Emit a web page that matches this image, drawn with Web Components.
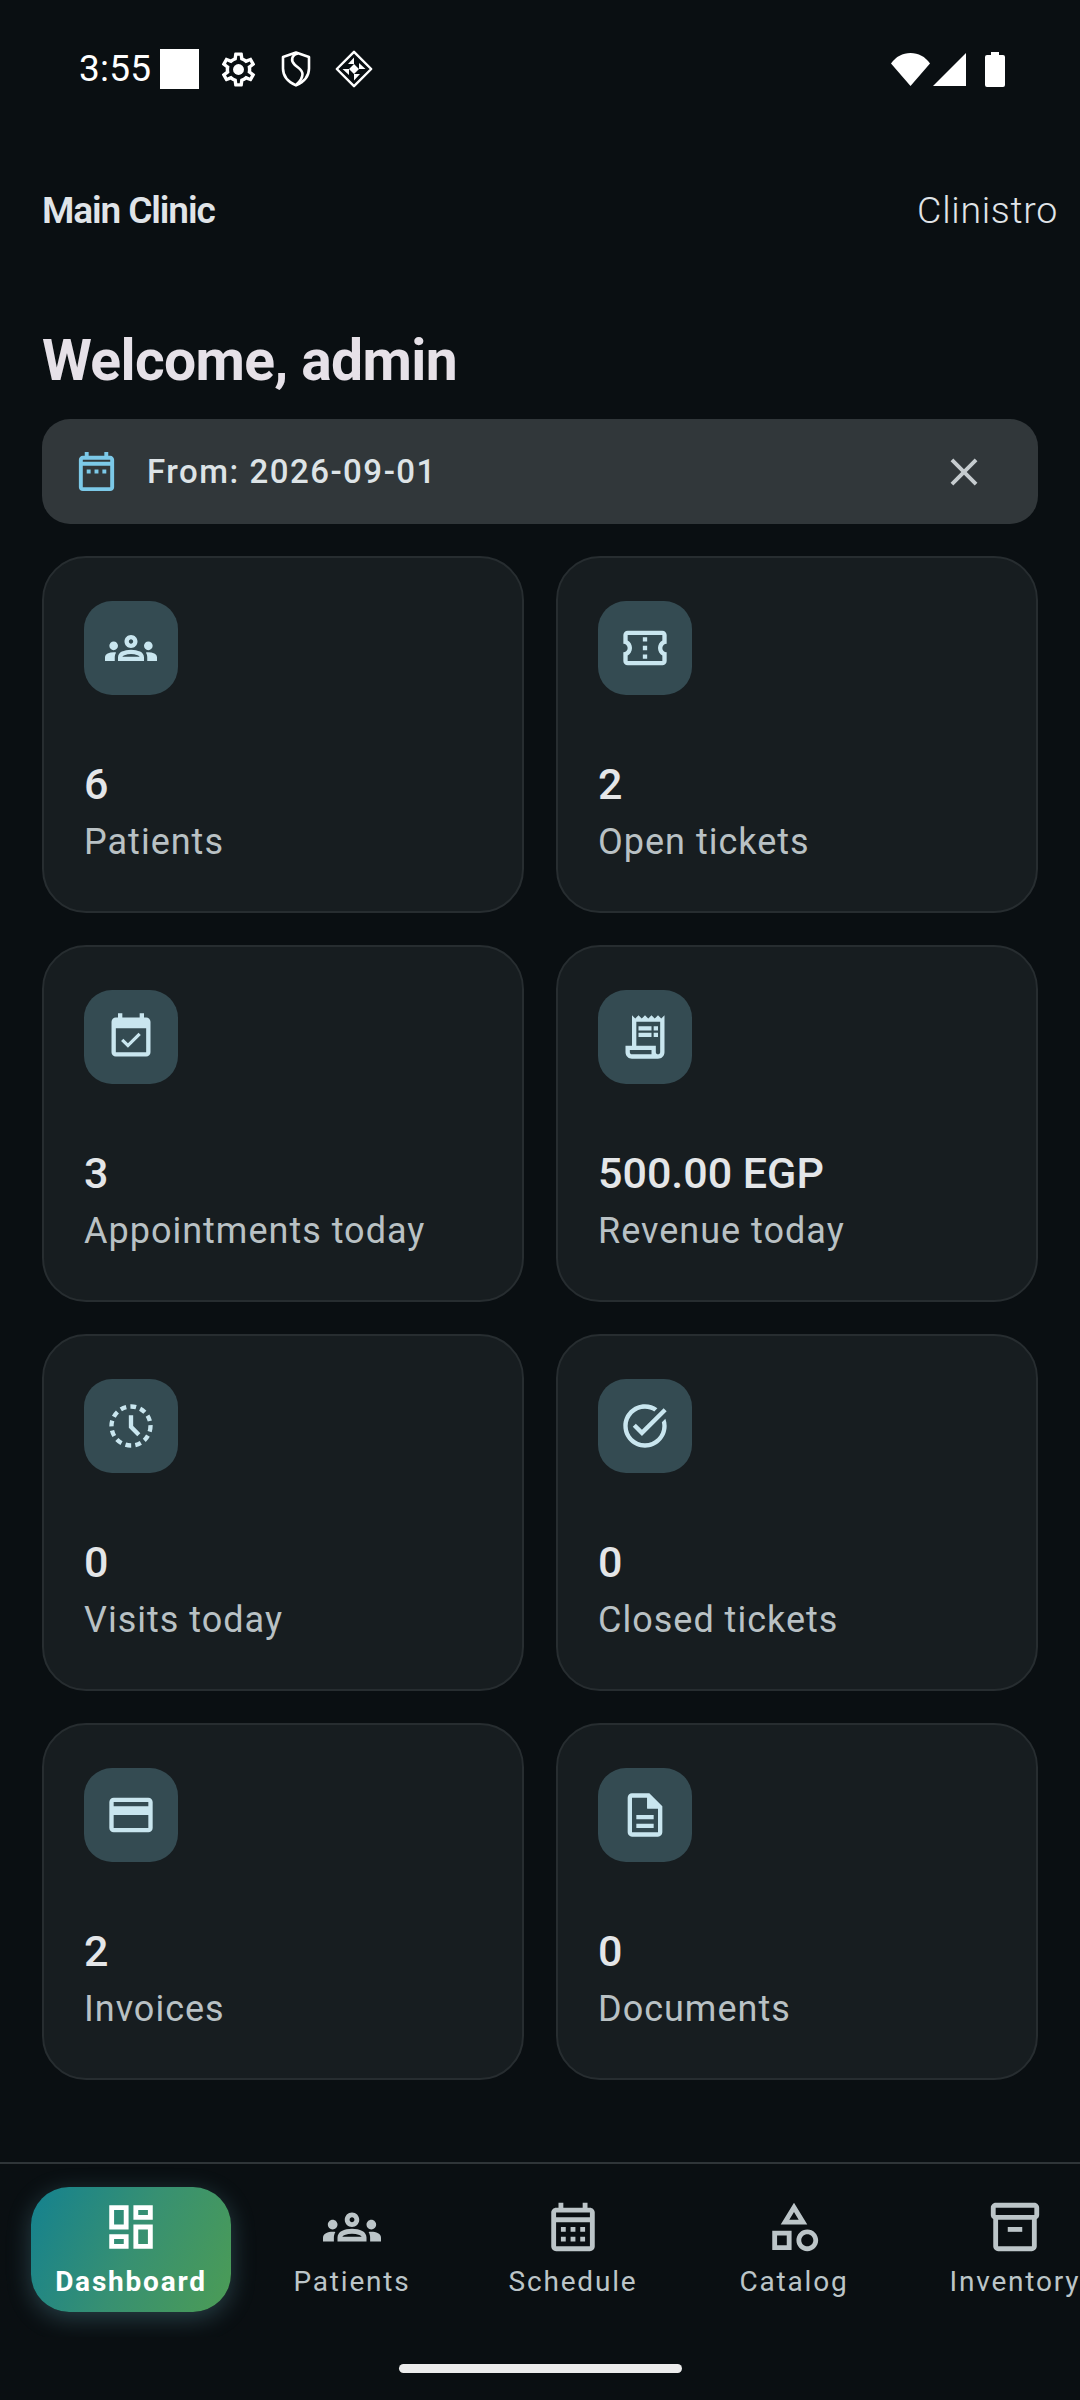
<!DOCTYPE html>
<html lang="en">
<head>
<meta charset="utf-8">
<title>Clinistro</title>
<style>
html, body { margin: 0; padding: 0; background: #0a0f12; }
body {
  width: 1080px;
  height: 2400px;
  overflow: hidden;
  display: flex;
  flex-direction: column;
  font-family: Roboto, "Noto Sans", sans-serif;
}
</style>
</head>
<body>
<status-bar></status-bar>
<app-bar title="Main Clinic" brand="Clinistro"></app-bar>
<main-view>
  <date-chip label="From: 2026-09-01"></date-chip>
  <stat-card icon="groups" value="6" label="Patients"></stat-card>
  <stat-card icon="ticket" value="2" label="Open tickets"></stat-card>
  <stat-card icon="event" value="3" label="Appointments today"></stat-card>
  <stat-card icon="receipt" value="500.00 EGP" label="Revenue today"></stat-card>
  <stat-card icon="clock" value="0" label="Visits today"></stat-card>
  <stat-card icon="task" value="0" label="Closed tickets"></stat-card>
  <stat-card icon="card" value="2" label="Invoices"></stat-card>
  <stat-card icon="doc" value="0" label="Documents"></stat-card>
</main-view>
<bottom-nav>
  <nav-item icon="dashboard" label="Dashboard" active></nav-item>
  <nav-item icon="groups" label="Patients"></nav-item>
  <nav-item icon="calendar" label="Schedule"></nav-item>
  <nav-item icon="category" label="Catalog"></nav-item>
  <nav-item icon="inventory" label="Inventory"></nav-item>
</bottom-nav>

<script>
const ICONS = {
  groups: '<path fill="currentColor" d="M4 13c1.1 0 2-.9 2-2s-.9-2-2-2-2 .9-2 2 .9 2 2 2zm1.13 1.1c-.37-.06-.74-.1-1.13-.1-.99 0-1.93.21-2.78.58C.48 14.9 0 15.62 0 16.43V18h4.5v-1.61c0-.83.23-1.61.63-2.29zM20 13c1.1 0 2-.9 2-2s-.9-2-2-2-2 .9-2 2 .9 2 2 2zm4 3.43c0-.81-.48-1.53-1.22-1.85-.85-.37-1.79-.58-2.78-.58-.39 0-.76.04-1.13.1.4.68.63 1.46.63 2.29V18H24v-1.57zm-7.76-2.78C15.07 13.13 13.63 12.75 12 12.75c-1.63 0-3.07.39-4.24.9C6.68 14.13 6 15.21 6 16.39V18h12v-1.61c0-1.18-.68-2.26-1.76-2.74zM8.07 16c.09-.23.13-.39.91-.69.97-.38 1.99-.56 3.02-.56s2.05.18 3.02.56c.77.3.81.46.91.69H8.07zM12 8c.55 0 1 .45 1 1s-.45 1-1 1-1-.45-1-1 .45-1 1-1m0-2c-1.66 0-3 1.34-3 3s1.34 3 3 3 3-1.34 3-3-1.34-3-3-3z"/>',
  ticket: '<path fill="currentColor" d="M22 10V6c0-1.11-.9-2-2-2H4c-1.1 0-1.99.89-1.99 2v4c1.1 0 1.99.9 1.99 2s-.89 2-2 2v4c0 1.1.9 2 2 2h16c1.1 0 2-.9 2-2v-4c-1.1 0-2-.9-2-2s.9-2 2-2zm-2-1.46c-1.19.69-2 1.99-2 3.46s.81 2.77 2 3.46V18H4v-2.54c1.19-.69 2-1.99 2-3.46 0-1.48-.8-2.77-1.99-3.46L4 6h16v2.54zM11 15h2v2h-2zm0-4h2v2h-2zm0-4h2v2h-2z"/>',
  event: '<path fill="currentColor" d="M16.53 11.06L15.47 10l-4.88 4.88-2.12-2.12-1.06 1.06L10.59 17l5.94-5.94zM19 3h-1V1h-2v2H8V1H6v2H5c-1.11 0-1.99.9-1.99 2L3 19c0 1.1.89 2 2 2h14c1.1 0 2-.9 2-2V5c0-1.1-.9-2-2-2zm0 16H5V8h14v11z"/>',
  receipt: '<path fill="currentColor" d="M19.5 3.5 18 2l-1.5 1.5L15 2l-1.5 1.5L12 2l-1.5 1.5L9 2 7.5 3.5 6 2v14H3v3c0 1.66 1.34 3 3 3h12c1.66 0 3-1.34 3-3V2l-1.5 1.5zM15 20H6c-.55 0-1-.45-1-1v-1h10v2zm4-1c0 .55-.45 1-1 1s-1-.45-1-1v-3H8V5h11v14z"/><path fill="currentColor" d="M9 7h6v2H9zm7 0h2v2h-2zM9 10h6v2H9zm7 0h2v2h-2z"/>',
  clock: '<circle cx="12" cy="12" r="9" fill="none" stroke="currentColor" stroke-width="2" stroke-dasharray="2.7 1.95"/><path fill="none" stroke="currentColor" stroke-width="2" d="M12 7v5.4l3.6 3.6"/>',
  task: '<path fill="currentColor" d="M22 5.18L10.59 16.6l-4.24-4.24 1.41-1.41 2.83 2.83 10-10L22 5.18zm-2.21 5.04c.13.57.21 1.17.21 1.78 0 4.42-3.58 8-8 8s-8-3.58-8-8 3.58-8 8-8c1.58 0 3.04.46 4.28 1.25l1.44-1.44C16.1 2.67 14.13 2 12 2 6.48 2 2 6.48 2 12s4.48 10 10 10 10-4.48 10-10c0-1.19-.22-2.33-.6-3.39l-1.61 1.61z"/>',
  card: '<path fill="currentColor" d="M20 4H4c-1.11 0-1.99.89-1.99 2L2 18c0 1.11.89 2 2 2h16c1.11 0 2-.89 2-2V6c0-1.11-.89-2-2-2zm0 14H4v-6h16v6zm0-10H4V6h16v2z"/>',
  doc: '<path fill="currentColor" d="M8 16h8v2H8zm0-4h8v2H8zm6-10H6c-1.1 0-2 .9-2 2v16c0 1.1.89 2 1.99 2H18c1.1 0 2-.9 2-2V8l-6-6zm4 18H6V4h7v5h5v11z"/><path fill="currentColor" d="M13 3h1l5 5v1h-6z"/>',
  dashboard: '<path fill="currentColor" d="M19 5v2h-4V5h4M9 5v6H5V5h4m10 8v6h-4v-6h4M9 17v2H5v-2h4M21 3h-8v6h8V3zM11 3H3v10h8V3zm10 8h-8v10h8V11zm-10 4H3v6h8v-6z"/>',
  calendar: '<path fill="currentColor" d="M19 4h-1V2h-2v2H8V2H6v2H5c-1.1 0-2 .9-2 2v14c0 1.1.9 2 2 2h14c1.1 0 2-.9 2-2V6c0-1.1-.9-2-2-2zm0 16H5V10h14v10zm0-12H5V6h14v2zM9 14H7v-2h2v2zm4 0h-2v-2h2v2zm4 0h-2v-2h2v2zm-8 4H7v-2h2v2zm4 0h-2v-2h2v2zm4 0h-2v-2h2v2z"/>',
  category: '<path fill="currentColor" d="M12 2l-5.5 9h11L12 2zm0 3.84L13.93 9h-3.87L12 5.84zM17.5 13c-2.49 0-4.5 2.01-4.5 4.5s2.01 4.5 4.5 4.5 4.5-2.01 4.5-4.5-2.01-4.5-4.5-4.5zm0 7c-1.38 0-2.5-1.12-2.5-2.5s1.12-2.5 2.5-2.5 2.5 1.12 2.5 2.5-1.12 2.5-2.5 2.5zM3 21.5h8v-8H3v8zm2-6h4v4H5v-4z"/>',
  inventory: '<path fill="currentColor" d="M20 2H4c-1 0-2 .9-2 2v3.01c0 .72.43 1.34 1 1.69V20c0 1.1 1.1 2 2 2h14c.9 0 2-.9 2-2V8.7c.57-.35 1-.97 1-1.69V4c0-1.1-1-2-2-2zm-1 18H5V9h14v11zm1-13H4V4h16v3z"/><path fill="currentColor" d="M9 12h6v2H9z"/>',
  daterange: '<path fill="currentColor" d="M19 4h-1V2h-2v2H8V2H6v2H5c-1.1 0-2 .9-2 2v14c0 1.1.9 2 2 2h14c1.1 0 2-.9 2-2V6c0-1.1-.9-2-2-2zm0 16H5V9h14v11zm0-13H5V6h14v1zM7 11h2v2H7zm4 0h2v2h-2zm4 0h2v2h-2z"/>',
  close: '<path fill="currentColor" d="M19 6.41L17.59 5 12 10.59 6.41 5 5 6.41 10.59 12 5 17.59 6.41 19 12 13.41 17.59 19 19 17.59 13.41 12z"/>'
}

const svgIcon = (name, size) => `<svg viewBox="0 0 24 24" width="${size}" height="${size}">${ICONS[name]}</svg>`

customElements.define('status-bar',
  class extends HTMLElement {
    constructor () {
      super()
      this.attachShadow({ mode: 'open' }).innerHTML = `
<style>
:host {
  display: flex;
  align-items: center;
  height: 138px;
  box-sizing: border-box;
  padding: 0 75px 0 79px;
  color: #fff;
  font-size: 37px;
  line-height: 40px;
}
.time { width: 81px; letter-spacing: .2px; }
.block { width: 39px; height: 40px; background: #fff; }
svg { display: block; flex: none; }
.gear { margin-left: 19px; }
.shield { margin-left: 22px; }
.diamond { margin-left: 24px; }
.right { margin-left: auto; display: flex; align-items: center; }
.signal { margin-left: 3px; }
.battery { margin-left: 19px; }
</style>
<span class="time">3:55</span>
<span class="block"></span>
<svg class="gear" width="41" height="41" viewBox="0 0 24 24"><path fill="#fff" d="M19.43 12.98c.04-.32.07-.64.07-.98 0-.34-.03-.66-.07-.98l2.11-1.65c.19-.15.24-.42.12-.64l-2-3.46c-.09-.16-.26-.25-.44-.25-.06 0-.12.01-.17.03l-2.49 1c-.52-.4-1.08-.73-1.69-.98l-.38-2.65C14.46 2.18 14.25 2 14 2h-4c-.25 0-.46.18-.49.42l-.38 2.65c-.61.25-1.17.59-1.69.98l-2.49-1c-.06-.02-.12-.03-.18-.03-.17 0-.34.09-.43.25l-2 3.46c-.13.22-.07.49.12.64l2.11 1.65c-.04.32-.07.65-.07.98 0 .33.03.66.07.98l-2.11 1.65c-.19.15-.24.42-.12.64l2 3.46c.09.16.26.25.44.25.06 0 .12-.01.17-.03l2.49-1c.52.4 1.08.73 1.69.98l.38 2.65c.03.24.24.42.49.42h4c.25 0 .46-.18.49-.42l.38-2.65c.61-.25 1.17-.59 1.69-.98l2.49 1c.06.02.12.03.18.03.17 0 .34-.09.43-.25l2-3.46c.12-.22.07-.49-.12-.64l-2.11-1.65zm-1.98-1.71c.04.31.05.52.05.73 0 .21-.02.43-.05.73l-.14 1.13.89.7 1.08.84-.7 1.21-1.27-.51-1.04-.42-.9.68c-.43.32-.84.56-1.25.73l-1.06.43-.16 1.13-.2 1.35h-1.4l-.19-1.35-.16-1.13-1.06-.43c-.43-.18-.83-.41-1.23-.71l-.91-.7-1.06.43-1.27.51-.7-1.21 1.08-.84.89-.7-.14-1.13c-.03-.31-.05-.54-.05-.74s.02-.43.05-.73l.14-1.13-.89-.7-1.08-.84.7-1.21 1.27.51 1.04.42.9-.68c.43-.32.84-.56 1.25-.73l1.06-.43.16-1.13.2-1.35h1.39l.19 1.35.16 1.13 1.06.43c.43.18.83.41 1.23.71l.91.7 1.06-.43 1.27-.51.7 1.21-1.07.85-.89.7.14 1.13z"/><circle cx="12" cy="12" r="3.200" fill="#fff"/></svg>
<svg class="shield" width="30" height="36" viewBox="0 0 30 36" fill="none" stroke="#fff" stroke-width="2.600"><path d="M2 6 15 1.600 28 6v11.500c0 7.500-5.400 13.500-13 16.900C7.400 31 2 25 2 17.500z" stroke-linejoin="round"/><path d="M17 2.500C10.500 4 9.500 9.500 13.500 13.500c3.500 3.500 8 5 8 9.500 0 4.500-3 8-6.500 11"/></svg>
<svg class="diamond" width="38" height="38" viewBox="0 0 38 38"><path d="M19 1.800 36.200 19 19 36.200 1.800 19z" fill="none" stroke="#fff" stroke-width="2.400" stroke-linejoin="round"/><path fill="#fff" d="M19 7.500V14h-6zM19 19l0-5 5 5zM30.500 19H24v-6zM19 19h5l-5 5zM19 30.500V24h6zM19 19v5l-5-5zM7.500 19H14v6zM19 19h-5l5-5z"/></svg>
<div class="right">
  <svg width="39" height="33" viewBox="0 0 39 33"><path fill="#fff" d="M0 10.500C5 3.500 11.500 0 19.500 0S34 3.500 39 10.500L19.500 33z"/></svg>
  <svg class="signal" width="33" height="33" viewBox="0 0 33 33"><path fill="#fff" d="M33 0v33H0z"/></svg>
  <svg class="battery" width="20" height="35" viewBox="0 0 20 35"><path fill="#fff" d="M6 0h8v3h4a2 2 0 0 1 2 2v28a2 2 0 0 1-2 2H2a2 2 0 0 1-2-2V5a2 2 0 0 1 2-2h4z"/></svg>
</div>`
    }
  }
)

customElements.define('app-bar',
  class extends HTMLElement {
    constructor () {
      super()
      this.attachShadow({ mode: 'open' }).innerHTML = `
<style>
:host {
  display: flex;
  align-items: center;
  justify-content: space-between;
  height: 144px;
  box-sizing: border-box;
  padding: 0 22px 0 42px;
  color: #e0e4e8;
}
.title { font-size: 37px; font-weight: 600; letter-spacing: -1.1px; }
.brand { font-size: 37.5px; font-weight: 300; letter-spacing: .7px; }
</style>
<span class="title">${this.getAttribute('title')}</span>
<span class="brand">${this.getAttribute('brand')}</span>`
    }
  }
)

customElements.define('main-view',
  class extends HTMLElement {
    constructor () {
      super()
      this.attachShadow({ mode: 'open' }).innerHTML = `
<style>
:host {
  display: block;
  flex: 1;
  min-height: 0;
  box-sizing: border-box;
  padding: 0 42px;
}
h1 {
  margin: 0;
  height: 137px;
  padding-top: 47px;
  box-sizing: border-box;
  font-size: 57px;
  line-height: 64px;
  font-weight: 700;
  letter-spacing: -.65px;
  color: #e6e1e8;
}
.filters { display: block; margin-bottom: 32px; }
.grid {
  display: grid;
  grid-template-columns: 482px 482px;
  grid-auto-rows: 357px;
  gap: 32px;
}
</style>
<h1>Welcome, admin</h1>
<div class="filters"><slot name="filters"></slot></div>
<div class="grid"><slot></slot></div>`
    }

    connectedCallback () {
      const chip = this.querySelector('date-chip')
      if (chip) chip.setAttribute('slot', 'filters')
    }
  }
)

customElements.define('date-chip',
  class extends HTMLElement {
    constructor () {
      super()
      this.attachShadow({ mode: 'open' }).innerHTML = `
<style>
:host {
  display: flex;
  align-items: center;
  height: 105px;
  box-sizing: border-box;
  padding: 0 51px 0 31px;
  border-radius: 28px;
  background: #31373a;
  color: #dde3e6;
  font-size: 33px;
  font-weight: 500;
  letter-spacing: 1.5px;
}
svg { display: block; flex: none; }
.date { color: #7cc9e8; margin-right: 27px; }
.text { flex: 1; }
.close { color: #c6cccf; }
</style>
<span class="date">${svgIcon('daterange', 47)}</span>
<span class="text">${this.getAttribute('label')}</span>
<span class="close">${svgIcon('close', 46)}</span>`
    }
  }
)

customElements.define('stat-card',
  class extends HTMLElement {
    constructor () {
      super()
      this.attachShadow({ mode: 'open' }).innerHTML = `
<style>
:host {
  display: flex;
  flex-direction: column;
  box-sizing: border-box;
  padding: 43px 40px;
  border: 2px solid #272d30;
  border-radius: 44px;
  background: #171d20;
}
.tile {
  display: flex;
  align-items: center;
  justify-content: center;
  width: 94px;
  height: 94px;
  border-radius: 28px;
  background: #344b52;
  color: #c9e6ef;
}
svg { display: block; }
.value {
  margin-top: 61px;
  font-size: 43px;
  line-height: 56px;
  font-weight: 500;
  color: #e4e6e8;
}
.label {
  margin-top: 4px;
  font-size: 36px;
  line-height: 52px;
  letter-spacing: 1px;
  color: #b9c1c4;
}
</style>
<div class="tile">${svgIcon(this.getAttribute('icon'), 52)}</div>
<div class="value">${this.getAttribute('value')}</div>
<div class="label">${this.getAttribute('label')}</div>`
    }
  }
)

customElements.define('bottom-nav',
  class extends HTMLElement {
    constructor () {
      super()
      this.attachShadow({ mode: 'open' }).innerHTML = `
<style>
:host {
  display: block;
  height: 238px;
  box-sizing: border-box;
  border-top: 2px solid #2f3538;
  overflow: hidden;
  background: #0a0f12;
}
.items {
  display: flex;
  gap: 21px;
  padding: 23px 0 0 31px;
  height: 150px;
  overflow: hidden;
}
.pill {
  width: 283px;
  height: 9px;
  margin: 27px auto 0;
  border-radius: 5px;
  background: #ececec;
}
</style>
<div class="items"><slot></slot></div>
<div class="pill"></div>`
    }
  }
)

customElements.define('nav-item',
  class extends HTMLElement {
    constructor () {
      super()
      const active = this.hasAttribute('active')
      this.attachShadow({ mode: 'open' }).innerHTML = `
<style>
:host {
  display: flex;
  flex-direction: column;
  align-items: center;
  flex: none;
  width: 200px;
  height: 125px;
  box-sizing: border-box;
  padding-top: 11px;
  border-radius: 38px;
  color: #bcc5c8;
  white-space: nowrap;
}
:host([active]) {
  color: #fff;
  background: linear-gradient(115deg, #14818f 0%, #379072 50%, #4c9c55 100%);
  box-shadow: 0 6px 24px rgba(120, 190, 210, .28);
}
svg { display: block; }
.label {
  font-size: 28px;
  line-height: 34px;
  margin-top: 9px;
  letter-spacing: 1.8px;
  font-weight: ${active ? 700 : 400};
}
</style>
${svgIcon(this.getAttribute('icon'), 58)}
<span class="label">${this.getAttribute('label')}</span>`
    }
  }
)
</script>
</body>
</html>
